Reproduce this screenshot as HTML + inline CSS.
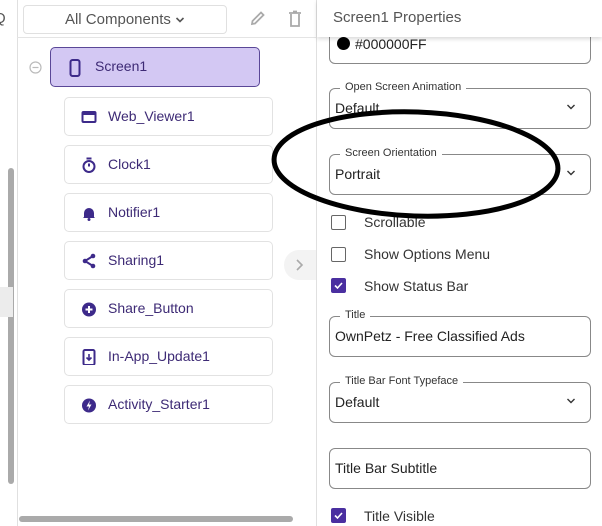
<!DOCTYPE html>
<html><head><meta charset="utf-8"><style>
*{box-sizing:border-box;margin:0;padding:0}
body{width:602px;height:526px;overflow:hidden;background:#fff;font-family:"Liberation Sans",sans-serif;position:relative}
.a{position:absolute}
.item{position:absolute;left:64px;width:209px;height:39px;border:1px solid #e2e2e2;border-radius:5px;background:#fff;color:#3d2a75;font-size:14px}
.item span{position:absolute;left:43px;top:10px}
.item svg{position:absolute;left:16px;top:11px}
.box{position:absolute;left:329px;width:262px;height:41px;border:1px solid #888;border-radius:6px;background:#fff;font-size:14px;color:#222}
.box .v{position:absolute;left:5px;top:11px}
.lg{position:absolute;left:10px;top:-8px;background:#fff;padding:0 5px;font-size:11px;color:#333}
.chev{position:absolute;right:14px;top:14px}
.cb{position:absolute;left:331px;width:15px;height:15px;border:1.5px solid #666;border-radius:2px;background:#fff}
.cb.on{background:#4a2fa0;border-color:#4a2fa0}
.cl{position:absolute;left:364px;font-size:14px;color:#333}
</style></head><body>
<div class="a" style="left:17px;top:0;width:1px;height:526px;background:#e0e0e0"></div>
<div class="a" style="left:316px;top:0;width:1px;height:526px;background:#e0e0e0"></div>
<div class="a" style="left:17px;top:37px;width:299px;height:1px;background:#e4e4e4"></div>
<div class="a" style="left:-6px;top:10px;font-size:15px;color:#555">Q</div>
<div class="a" style="left:23px;top:5px;width:204px;height:29px;border:1px solid #e0e0e0;border-radius:4px;font-size:15px;color:#555;text-align:center;line-height:27px">All Components <svg width="10" height="8" viewBox="0 0 10 8"><path d="M1.5 2 L5 5.5 L8.5 2" stroke="#555" stroke-width="1.6" fill="none"/></svg></div>
<svg class="a" style="left:249px;top:9px" width="18" height="18" viewBox="0 0 18 18"><path d="M3 15 L3.5 12 L12 3.5 L14.5 6 L6 14.5 Z" fill="none" stroke="#aaa" stroke-width="1.8"/></svg>
<svg class="a" style="left:287px;top:10px" width="16" height="18" viewBox="0 0 16 18"><path d="M2 3 H14 M6 1.5 H10 M4 4 V16 H12 V4" fill="none" stroke="#aaa" stroke-width="1.8"/></svg>
<svg class="a" style="left:29px;top:61px" width="13" height="13"><circle cx="6.5" cy="6.5" r="5.5" fill="none" stroke="#bbb" stroke-width="1.2"/><path d="M3.5 6.5 H9.5" stroke="#bbb" stroke-width="1.2"/></svg>
<div class="a" style="left:50px;top:47px;width:210px;height:40px;background:#d3c8f3;border:1px solid #5a4797;border-radius:5px;font-size:14px;color:#3d2a75">
<svg class="a" style="left:18px;top:11px" width="12" height="18" viewBox="0 0 12 18"><rect x="1.5" y="1" width="9" height="16" rx="2" fill="none" stroke="#3d2a8a" stroke-width="2"/></svg>
<span class="a" style="left:44px;top:10px">Screen1</span></div>
<div class="item" style="top:97px"><svg width="16" height="16"><rect x="1.5" y="3" width="13" height="10" rx="1" fill="none" stroke="#3d2a8a" stroke-width="2"/><rect x="1.5" y="3" width="13" height="3" fill="#3d2a8a"/></svg><span>Web_Viewer1</span></div>
<div class="item" style="top:145px"><svg width="16" height="16"><circle cx="8" cy="9.5" r="5.5" fill="none" stroke="#3d2a8a" stroke-width="2"/><path d="M5.5 1.5 H10.5 M8 9.5 V6.5" stroke="#3d2a8a" stroke-width="2"/></svg><span>Clock1</span></div>
<div class="item" style="top:193px"><svg width="16" height="16"><path d="M3 12 V8 A5 5 0 0 1 13 8 V12 L14 13 H2 Z" fill="#3d2a8a"/><circle cx="8" cy="14.5" r="1.5" fill="#3d2a8a"/></svg><span>Notifier1</span></div>
<div class="item" style="top:241px"><svg width="16" height="16"><path d="M12 3 L4 8 L12 13" stroke="#3d2a8a" stroke-width="2" fill="none"/><circle cx="12" cy="3" r="2.3" fill="#3d2a8a"/><circle cx="4" cy="8" r="2.3" fill="#3d2a8a"/><circle cx="12" cy="13" r="2.3" fill="#3d2a8a"/></svg><span>Sharing1</span></div>
<div class="item" style="top:289px"><svg width="16" height="16"><circle cx="8" cy="8.5" r="7" fill="#3d2a8a"/><path d="M8 5 V12 M4.5 8.5 H11.5" stroke="#fff" stroke-width="2"/></svg><span>Share_Button</span></div>
<div class="item" style="top:337px"><svg width="16" height="16"><rect x="2.5" y="1" width="11" height="15" rx="1.5" fill="none" stroke="#3d2a8a" stroke-width="2"/><path d="M8 5 V11 M5.5 8.5 L8 11 L10.5 8.5" stroke="#3d2a8a" stroke-width="1.6" fill="none"/></svg><span>In-App_Update1</span></div>
<div class="item" style="top:385px"><svg width="16" height="16"><circle cx="8" cy="8.5" r="7" fill="#3d2a8a"/><path d="M9 3.5 L5.5 9.5 H8 L7 13.5 L10.5 7.5 H8 Z" fill="#fff"/></svg><span>Activity_Starter1</span></div>
<div class="a" style="left:8px;top:168px;width:6px;height:316px;background:#aaa;border-radius:3px"></div>
<div class="a" style="left:0;top:287px;width:13px;height:30px;background:#ececec"></div>
<div class="a" style="left:19px;top:516px;width:274px;height:6px;background:#aaa;border-radius:3px"></div>
<div class="a" style="left:284px;top:250px;width:32px;height:30px;background:#f3f3f3;border-radius:15px 0 0 15px"></div>
<svg class="a" style="left:294px;top:258px" width="10" height="14"><path d="M3 2 L8 7 L3 12" stroke="#aaa" stroke-width="1.6" fill="none"/></svg>
<div class="box" style="top:22px;height:42px"><div class="a" style="left:7px;top:14px;width:13px;height:13px;border-radius:50%;background:#000"></div><span class="a" style="left:25px;top:13px">#000000FF</span></div>
<div class="a" style="left:317px;top:0;width:285px;height:37px;background:#fff;box-shadow:0 2px 4px rgba(0,0,0,.15)"><span class="a" style="left:16px;top:9px;font-size:15px;color:#555">Screen1 Properties</span></div>
<div class="box" style="top:88px"><div class="lg">Open Screen Animation</div><span class="v">Default</span><svg class="chev" width="10" height="8"><path d="M1.5 2 L5 5.5 L8.5 2" stroke="#333" stroke-width="1.4" fill="none"/></svg></div>
<div class="box" style="top:154px"><div class="lg">Screen Orientation</div><span class="v">Portrait</span><svg class="chev" width="10" height="8"><path d="M1.5 2 L5 5.5 L8.5 2" stroke="#333" stroke-width="1.4" fill="none"/></svg></div>
<div class="cb" style="top:215px"></div><div class="cl" style="top:214px">Scrollable</div>
<div class="cb" style="top:247px"></div><div class="cl" style="top:246px">Show Options Menu</div>
<div class="cb on" style="top:278px"><svg class="a" style="left:1px;top:1px" width="11" height="11"><path d="M2 5.5 L4.5 8 L9 3" stroke="#fff" stroke-width="1.6" fill="none"/></svg></div><div class="cl" style="top:278px">Show Status Bar</div>
<div class="box" style="top:316px"><div class="lg">Title</div><span class="v">OwnPetz - Free Classified Ads</span></div>
<div class="box" style="top:382px"><div class="lg">Title Bar Font Typeface</div><span class="v">Default</span><svg class="chev" width="10" height="8"><path d="M1.5 2 L5 5.5 L8.5 2" stroke="#333" stroke-width="1.4" fill="none"/></svg></div>
<div class="box" style="top:448px"><span class="v">Title Bar Subtitle</span></div>
<div class="cb on" style="top:508px"><svg class="a" style="left:1px;top:1px" width="11" height="11"><path d="M2 5.5 L4.5 8 L9 3" stroke="#fff" stroke-width="1.6" fill="none"/></svg></div><div class="cl" style="top:508px">Title Visible</div>
<svg class="a" style="left:0;top:0" width="602" height="526"><ellipse cx="416" cy="164" rx="142" ry="52" transform="rotate(2 416 164)" fill="none" stroke="#000" stroke-width="5"/></svg>
</body></html>
